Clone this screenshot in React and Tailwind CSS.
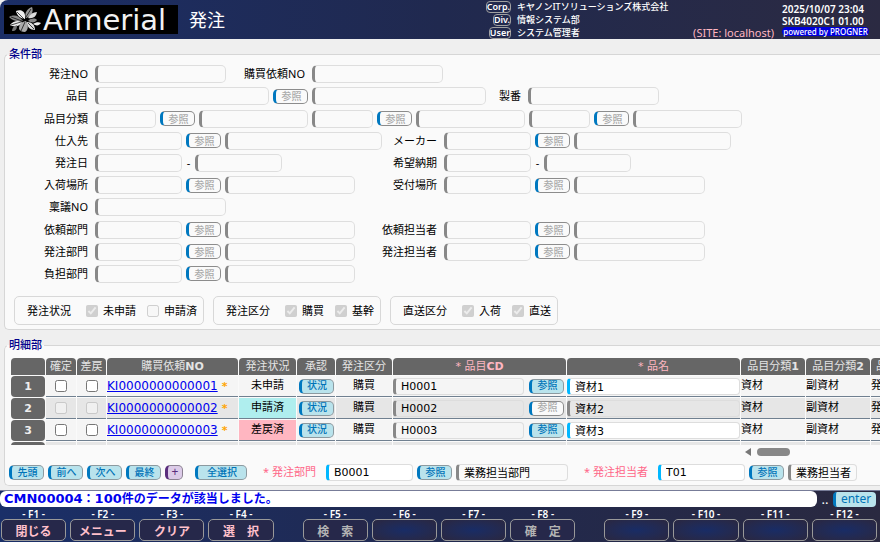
import React from "react";

const disabledField = "h-[18px] shrink-0 rounded-[5px] border border-l-[3px] border-[#dedede] border-l-[#888888] bg-[#fafafa]";

function Label({ id, w, children }) {
  return (
    <label htmlFor={id} className={`${w} shrink-0 whitespace-nowrap pr-[3px] text-right`}>
      {children}
    </label>
  );
}

function Field({ id, w, label }) {
  return <input id={id} aria-label={label} disabled className={`${w} ${disabledField}`} />;
}

function Ref({ label = "参照", disabled = true, w = "w-[35px]" }) {
  const tone = disabled
    ? "border-[#8c8c8c] bg-[#fafafa] text-[#aaaaaa]"
    : "border-[#8c9aa0] bg-[#b9e3ec] text-[#0073b8]";
  return (
    <button
      type="button"
      disabled={disabled}
      className={`${w} ${tone} h-[15px] shrink-0 whitespace-nowrap rounded-[5px] border border-l-[3px] border-l-[#0078bf] text-center text-[10px] leading-3 font-medium`}
    >
      {label}
    </button>
  );
}

function Row({ children }) {
  return <div className="flex flex-1 items-center gap-1">{children}</div>;
}

function RefGroup({ id, label, w }) {
  return (
    <>
      <Label id={id} w={w.label}>{label}</Label>
      <Field id={id} w="w-[87px]" />
      <Ref />
      <Field w={w.name} label={label + "名"} />
    </>
  );
}

function DateGroup({ id, label, w }) {
  return (
    <>
      <Label id={id} w={w}>{label}</Label>
      <Field id={id} w="w-[87px]" />
      <span className="w-[5px] text-center">-</span>
      <Field w="w-[87px]" label={label + "(終了)"} />
    </>
  );
}

function Split({ left, right }) {
  return (
    <div className="flex flex-1 items-center">
      <div className="flex w-[376px] shrink-0 items-center gap-1">{left}</div>
      {right && <div className="flex items-center gap-1">{right}</div>}
    </div>
  );
}

function CheckGroup({ title, items }) {
  return (
    <div role="group" aria-label={title} className="flex h-[29px] items-center gap-[11px] rounded-[5px] border border-[#d8d8d8] pl-3 pr-[6px]">
      <span className="w-12">{title}</span>
      {items.map(([text, on]) => (
        <label key={text} className="flex items-center gap-[5px]">
          <input type="checkbox" defaultChecked={on} disabled className="m-0 h-3 w-3" />
          {text}
        </label>
      ))}
    </div>
  );
}

const L = "w-[86px]";
const R = "w-[59px]";
const leftRef = { label: L, name: "w-[130px]" };
const rightRef = { label: R, name: "w-[131px]" };

function Conditions() {
  return (
    <fieldset className="mt-[9px] ml-1 rounded-l-[5px] border border-r-0 border-[#d6d6d6] bg-[#fafafa] bg-clip-padding pb-1">
      <legend className="ml-[2px] px-[2px] text-[11px] leading-3 font-medium text-[#00008b]">条件部</legend>
      <div className="mt-[3px] flex h-[222px] flex-col">
        <Row>
          <Label id="order" w={L}>発注NO</Label>
          <Field id="order" w="w-[131px]" />
          <Label id="request" w="w-[78px]">購買依頼NO</Label>
          <Field id="request" w="w-[131px]" />
        </Row>
        <Row>
          <Label id="item" w={L}>品目</Label>
          <Field id="item" w="w-[174px]" />
          <Ref />
          <Field w="w-[174px]" label="品目名" />
          <Label id="serial" w="w-[34px]">製番</Label>
          <Field id="serial" w="w-[131px]" />
        </Row>
        <Row>
          <Label id="class1" w={L}>品目分類</Label>
          {[1, 2, 3].map((n) => (
            <React.Fragment key={n}>
              <Field id={"class" + n} w="w-[61px]" label={"品目分類" + n} />
              <Ref />
              <Field w="w-[109px]" label={"品目分類名" + n} />
            </React.Fragment>
          ))}
        </Row>
        <Split
          left={<RefGroup id="supplier" label="仕入先" w={{ label: L, name: "w-[157px]" }} />}
          right={<RefGroup id="maker" label="メーカー" w={{ label: R, name: "w-[157px]" }} />}
        />
        <Split
          left={<DateGroup id="date" label="発注日" w={L} />}
          right={<DateGroup id="due" label="希望納期" w={R} />}
        />
        <Split
          left={<RefGroup id="arrival" label="入荷場所" w={leftRef} />}
          right={<RefGroup id="reception" label="受付場所" w={rightRef} />}
        />
        <Row>
          <Label id="ringi" w={L}>稟議NO</Label>
          <Field id="ringi" w="w-[131px]" />
        </Row>
        <Split
          left={<RefGroup id="reqdept" label="依頼部門" w={leftRef} />}
          right={<RefGroup id="reqperson" label="依頼担当者" w={rightRef} />}
        />
        <Split
          left={<RefGroup id="orddept" label="発注部門" w={leftRef} />}
          right={<RefGroup id="ordperson" label="発注担当者" w={rightRef} />}
        />
        <Split left={<RefGroup id="costdept" label="負担部門" w={leftRef} />} />
      </div>
      <div className="ml-[9px] mt-[11px] flex gap-[9px]">
        <CheckGroup title="発注状況" items={[["未申請", true], ["申請済", false]]} />
        <CheckGroup title="発注区分" items={[["購買", true], ["基幹", true]]} />
        <CheckGroup title="直送区分" items={[["入荷", true], ["直送", true]]} />
      </div>
    </fieldset>
  );
}

const th = "h-[17px] overflow-hidden whitespace-nowrap rounded-t-[4px] bg-[#666666] p-0 text-center font-normal leading-4 text-[#e4e4e4]";
const req = "text-[#ffb6c1]";
const rows = [
  { n: 1, status: "未申請", tone: "", locked: false },
  { n: 2, status: "申請済", tone: "bg-[#afeeee]", locked: true },
  { n: 3, status: "差戻済", tone: "bg-[#ffb6c1]", locked: false },
];

function DetailRow({ n, status, tone, locked }) {
  const bg = locked ? "bg-[#e6e6e6]" : "bg-[#f5f5f5]";
  const td = `h-[21px] overflow-hidden whitespace-nowrap border-b border-[#708090] p-0 ${bg}`;
  return (
    <tr>
      <th scope="row" className="h-[21px] rounded-[4px] bg-[#666666] p-0 text-center font-bold text-[#eeeeee]">{n}</th>
      <td className={td}><input type="checkbox" aria-label={"確定 " + n} disabled={locked} className="mx-auto my-0 block h-3 w-3" /></td>
      <td className={td}><input type="checkbox" aria-label={"差戻 " + n} disabled={locked} className="mx-auto my-0 block h-3 w-3" /></td>
      <td className={td}>
        <a href="#detail" className="text-[12px] text-[#0000ee] underline">{"KI000000000000" + n}</a>
        <span className="ml-1 font-bold text-[#ffa500]">*</span>
      </td>
      <td className={`h-[21px] border-b border-[#708090] p-0 text-center ${tone || bg}`}>{status}</td>
      <td className={td}><div className="flex justify-center"><Ref label="状況" disabled={false} /></div></td>
      <td className={`${td} text-center`}>購買</td>
      <td className={td}>
        <div className="flex items-center justify-between">
          <input aria-label={"品目CD " + n} readOnly defaultValue={"H000" + n} className="h-[17px] w-[131px] rounded-[4px] border border-l-[3px] border-[#dddddd] border-l-[#888888] bg-transparent pl-[5px]" />
          <div className="pr-[2px]"><Ref disabled={locked} /></div>
        </div>
      </td>
      <td className={td}>
        <input
          aria-label={"品名 " + n}
          readOnly={locked}
          defaultValue={"資材" + n}
          className={`block h-[17px] w-full rounded-[4px] border border-l-[3px] border-[#dddddd] pl-[5px] ${locked ? "border-l-[#888888] bg-transparent" : "border-l-[#00b7ff] bg-white"}`}
        />
      </td>
      <td className={td}>資材</td>
      <td className={td}>副資材</td>
      <td className={td}>発注</td>
    </tr>
  );
}

const barInput = "h-[17px] shrink-0 rounded-[4px] border border-l-[3px] border-[#dddddd] pl-[5px]";

function Details() {
  return (
    <fieldset className="mt-[9px] ml-1 min-w-0 rounded-l-[5px] border border-r-0 border-[#d6d6d6] bg-[#fafafa]">
      <legend className="ml-[2px] px-[2px] text-[11px] leading-3 font-medium text-[#00008b]">明細部</legend>
      <div className="ml-[5px] mt-[6px] h-[88px] overflow-hidden">
        <table className="w-[926px] table-fixed border-separate border-spacing-[1px] text-[11px] leading-4">
          <colgroup>
            <col className="w-[34px]" /><col className="w-[30px]" /><col className="w-[29px]" />
            <col className="w-[131px]" /><col className="w-[57px]" /><col className="w-[38px]" />
            <col className="w-[56px]" /><col className="w-[173px]" /><col className="w-[173px]" />
            <col className="w-[64px]" /><col className="w-[64px]" /><col className="w-[64px]" />
          </colgroup>
          <thead>
            <tr>
              <th className={th} aria-label="行" />
              <th className={th}>確定</th>
              <th className={th}>差戻</th>
              <th className={th}>購買依頼<b>NO</b></th>
              <th className={th}>発注状況</th>
              <th className={th}>承認</th>
              <th className={th}>発注区分</th>
              <th className={th}><span className={req}>* 品目<b>CD</b></span></th>
              <th className={th}><span className={req}>* 品名</span></th>
              <th className={th}>品目分類<b>1</b></th>
              <th className={th}>品目分類<b>2</b></th>
              <th className={`${th} pl-[5px] text-left`}>品目分類<b>3</b></th>
            </tr>
          </thead>
          <tbody>
            {rows.map((r) => <DetailRow key={r.n} {...r} />)}
            <tr>
              <th className="h-[21px] rounded-[4px] bg-[#666666]" aria-label="4" />
              {Array.from({ length: 11 }, (_, i) => <td key={i} className="bg-[#e6e6e6] p-0" />)}
            </tr>
          </tbody>
        </table>
      </div>
      <div className="ml-[740px] flex h-[14px] items-center gap-[6px]" aria-hidden="true">
        <svg width="6" height="8" viewBox="0 0 6 8"><path d="M6 0v8L0 4z" fill="#777" /></svg>
        <span className="h-2 w-[33px] rounded-full bg-[#888888]" />
      </div>
      <div className="ml-1 mt-1 flex h-[18px] items-center gap-1">
        <Ref label="先頭" disabled={false} />
        <Ref label="前へ" disabled={false} />
        <Ref label="次へ" disabled={false} />
        <Ref label="最終" disabled={false} />
        <button type="button" className="h-[15px] w-[18px] rounded-[5px] border border-l-[3px] border-[#8a8090] border-l-[#5a2d7c] bg-[#dccbe8] text-center text-[12px] leading-3 text-[#5a2d7c]">+</button>
        <span className="w-1" />
        <Ref label="全選択" disabled={false} w="w-[52px]" />
        <label htmlFor="dept" className="w-[71px] shrink-0 whitespace-nowrap pr-[6px] text-right text-[#ff6688]">* 発注部門</label>
        <input id="dept" defaultValue="B0001" className={`${barInput} w-[87px] border-l-[#00b7ff] bg-white`} />
        <Ref disabled={false} />
        <input aria-label="発注部門名" readOnly defaultValue="業務担当部門" className={`${barInput} w-[112px] border-l-[#888888] bg-transparent pl-[3px]`} />
        <label htmlFor="person" className="w-[82px] shrink-0 whitespace-nowrap pr-[6px] text-right text-[#ff6688]">* 発注担当者</label>
        <input id="person" defaultValue="T01" className={`${barInput} w-[87px] border-l-[#00b7ff] bg-white`} />
        <Ref disabled={false} />
        <input aria-label="発注担当者名" readOnly defaultValue="業務担当者" className={`${barInput} w-[69px] border-l-[#888888] bg-transparent pl-[3px]`} />
      </div>
      <div className="h-[4px]" />
    </fieldset>
  );
}

function Flower() {
  return (
    <svg width="34" height="26" viewBox="0 0 34 26" className="shrink-0" aria-hidden="true">
      <path d="M7 4c5-2 10 0 9 8C10 11 8 8 7 4z" fill="#eeeeee" />
      <path d="M17 11c-2-5 1-9 6-11 2 5-1 9-6 11z" fill="#999999" />
      <path d="M19 11c2-4 5-6 9-6-1 5-4 7-9 6z" fill="#dddddd" />
      <path d="M0 10c6-3 10-1 14 4C8 15 4 14 0 10z" fill="#888888" />
      <path d="M1 18c3-4 8-5 12-3-2 4-7 6-12 3z" fill="#eeeeee" />
      <path d="M10 22c0-5 2-7 7-8 3 5 2 9-1 11-3 0-5-1-6-3z" fill="#aaaaaa" />
      <path d="M18 15c5 0 8 3 8 8-5 0-8-3-8-8z" fill="#dddddd" />
      <path d="M19 14c3-3 7-3 9-1-2 3-5 3-9 1z" fill="#888888" />
      <path d="M24 17c3-2 6-2 8-1-2 3-5 3-8 1z" fill="#eeeeee" />
      <path d="M3 24c0-3 2-5 5-6 0 4-1 6-5 6z" fill="#777777" />
      <path d="M8 5l7 7M2 10l11 4M22 2l-5 8M2 18l10-3M12 24l4-9M25 22l-6-6" stroke="#000" strokeWidth=".7" />
    </svg>
  );
}

const people = [
  ["Corp.", "キヤノンITソリューションズ株式会社"],
  ["Div.", "情報システム部"],
  ["User", "システム管理者"],
];

function Header() {
  return (
    <header className="flex h-[39px] items-center rounded-tl-lg bg-linear-to-r from-[#1b2e66] via-[#20294f] to-[#2b2a42] font-['Noto_Sans','Noto_Sans_CJK_JP',sans-serif] text-white">
      <div className="ml-1 flex h-[29px] w-[174px] shrink-0 items-center bg-black pl-[5px]">
        <Flower />
        <span className="font-['DejaVu_Sans',sans-serif] text-[29px] leading-7 text-[#f2f2f2]">Armerial</span>
      </div>
      <h1 className="ml-[11px] flex-1 text-[18px] leading-6">発注</h1>
      <dl className="grid w-[200px] grid-cols-[26px_auto] gap-x-[6px] text-[9px]">
        {people.map(([k, v]) => (
          <React.Fragment key={k}>
            <dt className="flex h-[13px] items-center justify-end">
              <span className="rounded-[4px] border border-[#a0a0a0] text-[9px] leading-[10px] font-semibold">{k}</span>
            </dt>
            <dd className="whitespace-nowrap leading-[13px] font-medium">{v}</dd>
          </React.Fragment>
        ))}
      </dl>
      <div className="ml-[8px] self-end whitespace-nowrap text-[11px] leading-[13px] text-[#ffb6c1]">(SITE: localhost)</div>
      <div className="ml-[8px] mr-[11px] flex w-[87px] flex-col whitespace-nowrap text-[10px] leading-[12px] font-semibold">
        <span>2025/10/07 23:04</span>
        <span>SKB4020C1 01.00</span>
        <span className="w-full rounded-full bg-[#0000dd] text-center text-[8px] leading-[9px] font-medium">powered by PROGNER</span>
      </div>
    </header>
  );
}

const keys = [
  ["閉じる", "メニュー", "クリア", "選　択"],
  ["検　索", "", "", "確　定"],
  ["", "", "", ""],
];

function Footer() {
  return (
    <footer className="bg-linear-to-r from-[#1a2f68] via-[#20294f] to-[#2a2940] pb-px font-['Noto_Sans','Noto_Sans_CJK_JP',sans-serif]">
      <div className="flex h-[17px] items-center border-t border-[#777c98]">
        <output className="h-4 flex-1 overflow-hidden whitespace-nowrap rounded-md bg-white pl-1 font-['DejaVu_Sans','Noto_Sans_CJK_JP',sans-serif] text-[12px] leading-4 font-bold text-[#0000ee]">
          <span className="text-[13px]">CMN00004</span>：<span className="text-[13px]">100</span>件のデータが該当しました。
        </output>
        <span className="w-4 text-center text-[13px] leading-3 text-white">..</span>
        <button type="button" className="mr-1 h-[15px] w-[43px] rounded-[4px] border-l-[3px] border-[#0078bf] bg-[#b9e3ec] text-[12px] leading-3 text-[#0073b8]">enter</button>
      </div>
      <div className="grid grid-cols-3 gap-[29px] pl-px pr-[3px]">
        {keys.map((group, g) => (
          <div key={g} className="grid grid-cols-4 gap-1">
            {group.map((text, i) => (
              <div key={i} className="text-center">
                <div className="h-3 text-[10px] leading-[14px] font-semibold text-white">- F{g * 4 + i + 1} -</div>
                <button
                  type="button"
                  aria-label={text || "F" + (g * 4 + i + 1)}
                  disabled={g > 0}
                  className={`block h-[22px] w-full whitespace-nowrap rounded-[5px] border border-[#999999] pt-[2px] text-[12px] leading-5 font-bold ${text ? "bg-[#26284a]" : "bg-radial from-[#182c66] to-[#2a2740]"} ${g === 0 ? "text-[#ffc0cb]" : "text-[#b4b4b4]"}`}
                >
                  {text}
                </button>
              </div>
            ))}
          </div>
        ))}
      </div>
    </footer>
  );
}

export default function App() {
  return (
    <div className="flex min-h-screen flex-col overflow-hidden bg-[#efefef] font-['DejaVu_Sans','Noto_Sans_CJK_JP',sans-serif] text-[11px] leading-4 text-black">
      <Header />
      <main className="flex-1 font-['Noto_Sans','Noto_Sans_CJK_JP',sans-serif] [&_input]:font-['DejaVu_Sans','Noto_Sans_CJK_JP',sans-serif] [&_table]:font-['DejaVu_Sans','Noto_Sans_CJK_JP',sans-serif]">
        <Conditions />
        <Details />
      </main>
      <Footer />
    </div>
  );
}
